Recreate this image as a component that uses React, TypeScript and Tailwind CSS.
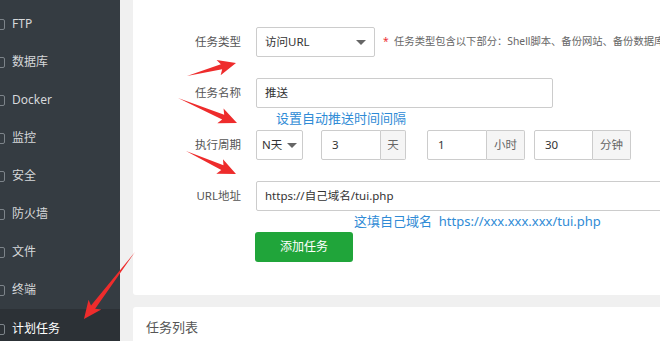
import React from "react";

const font = { fontFamily: '"Noto Sans", "Noto Sans CJK SC", sans-serif' };

const navItems = ["FTP", "数据库", "Docker", "监控", "安全", "防火墙", "文件", "终端", "计划任务"];

function arrowPoints(tx: number, ty: number, px: number, py: number) {
  const dx = px - tx;
  const dy = py - ty;
  const L = Math.hypot(dx, dy);
  const ux = dx / L;
  const uy = dy / L;
  const nx = -uy;
  const ny = ux;
  const h = 15;
  const bx = px - ux * h;
  const by = py - uy * h;
  const sw = 2.6;
  const hw = 8;
  const back = 3;
  const pts = [
    [tx, ty],
    [bx + nx * sw, by + ny * sw],
    [bx - ux * back + nx * hw, by - uy * back + ny * hw],
    [px, py],
    [bx - ux * back - nx * hw, by - uy * back - ny * hw],
    [bx - nx * sw, by - ny * sw],
  ];
  return pts.map((p) => p.join(",")).join(" ");
}

function Caret() {
  return (
    <span className="inline-block w-0 h-0 border-l-[5px] border-r-[5px] border-t-[5px] border-l-transparent border-r-transparent border-t-[#666]" />
  );
}

function NumGroup({ value, unit, inputW, unitW }: { value: string; unit: string; inputW: string; unitW: string }) {
  return (
    <div className="flex h-[30px]">
      <div className={`${inputW} border border-[#ccc] rounded-l-[2px] flex items-center pl-[10px] text-[11.5px] text-[#333]`}>{value}</div>
      <div className={`${unitW} border border-l-0 border-[#ccc] rounded-r-[2px] bg-[#f5f5f5] flex items-center justify-center text-[11.5px] text-[#666]`}>{unit}</div>
    </div>
  );
}

export default function App() {
  return (
    <div className="relative flex w-[660px] h-[341px] overflow-hidden bg-[#f0f0f0]" style={font}>
      <div className="w-[120px] shrink-0 bg-[#353c42] flex flex-col pt-[5px]">
        {navItems.map((t, i) => (
          <div
            key={t}
            className={`shrink-0 flex items-center gap-[7px] ${i === navItems.length - 1 ? "bg-[#2c3136] h-[40px] text-white" : "h-[38px] text-[#d6d8da]"}`}
          >
            <span className="ml-[-7px] w-[12px] h-[11px] border border-[#7d848a] rounded-[2px]" />
            <span className="text-[12px]">{t}</span>
          </div>
        ))}
      </div>
      <div className="flex-1 pl-[13px] flex flex-col">
        <div className="bg-white h-[295px] shrink-0 rounded-b-[3px] pt-[27px] flex flex-col">
          <div className="flex items-center h-[30px]">
            <div className="w-[108px] text-right text-[11.5px] text-[#555]">任务类型</div>
            <div className="ml-[15px] w-[119px] h-[30px] border border-[#ccc] rounded-[2px] flex items-center justify-between pl-[8px] pr-[8px] text-[11.5px] text-[#333]">
              <span>访问URL</span>
              <Caret />
            </div>
            <div className="ml-[8px] text-[10.3px] text-[#666] whitespace-nowrap">
              <span className="text-[#e33]">*</span>&nbsp; 任务类型包含以下部分：Shell脚本、备份网站、备份数据库
            </div>
          </div>
          <div className="flex items-center h-[30px] mt-[21px]">
            <div className="w-[108px] text-right text-[11.5px] text-[#555]">任务名称</div>
            <div className="ml-[15px] w-[297px] h-[30px] border border-[#ccc] rounded-[2px] flex items-center pl-[8px] text-[11.5px] text-[#333]">推送</div>
          </div>
          <div className="h-[22px] flex items-center pl-[143px] text-[13px] text-[#2f8bd6]">设置自动推送时间间隔</div>
          <div className="flex items-center h-[30px]">
            <div className="w-[108px] text-right text-[11.5px] text-[#555]">执行周期</div>
            <div className="ml-[15px] w-[47px] h-[30px] border border-[#ccc] rounded-[2px] flex items-center justify-between pl-[5px] pr-[5px] text-[11.5px] text-[#333]">
              <span>N天</span>
              <Caret />
            </div>
            <div className="ml-[18px]">
              <NumGroup value="3" unit="天" inputW="w-[60px]" unitW="w-[25px]" />
            </div>
            <div className="ml-[21px]">
              <NumGroup value="1" unit="小时" inputW="w-[60px]" unitW="w-[38px]" />
            </div>
            <div className="ml-[9px]">
              <NumGroup value="30" unit="分钟" inputW="w-[59px]" unitW="w-[38px]" />
            </div>
          </div>
          <div className="flex items-center h-[30px] mt-[21px]">
            <div className="w-[108px] text-right text-[11.5px] text-[#555]">URL地址</div>
            <div className="ml-[15px] w-[420px] shrink-0 h-[30px] border border-[#ccc] rounded-[2px] flex items-center pl-[8px] text-[11.5px] text-[#333]">https://自己域名/tui.php</div>
          </div>
          <div className="h-[21px] flex items-center pl-[221px] text-[13px] text-[#2f8bd6] whitespace-nowrap">
            这填自己域名&nbsp;&nbsp;https://xxx.xxx.xxx/tui.php
          </div>
          <div className="pl-[122px]">
            <button className="w-[98px] h-[30px] bg-[#20a53a] rounded-[3px] text-white text-[12px]">添加任务</button>
          </div>
        </div>
        <div className="mt-[12px] bg-white rounded-t-[3px] flex-1 pl-[13px] pt-[11px] text-[13px] text-[#555]">任务列表</div>
      </div>
      <svg className="absolute inset-0 pointer-events-none" width="660" height="341">
        <polygon points={arrowPoints(187, 76, 236, 63)} fill="#ee2c2c" />
        <polygon points={arrowPoints(178, 98, 237, 123)} fill="#ee2c2c" />
        <polygon points={arrowPoints(186, 151, 236, 174)} fill="#ee2c2c" />
        <polygon points={arrowPoints(135, 252, 84, 319)} fill="#ee2c2c" />
      </svg>
    </div>
  );
}
